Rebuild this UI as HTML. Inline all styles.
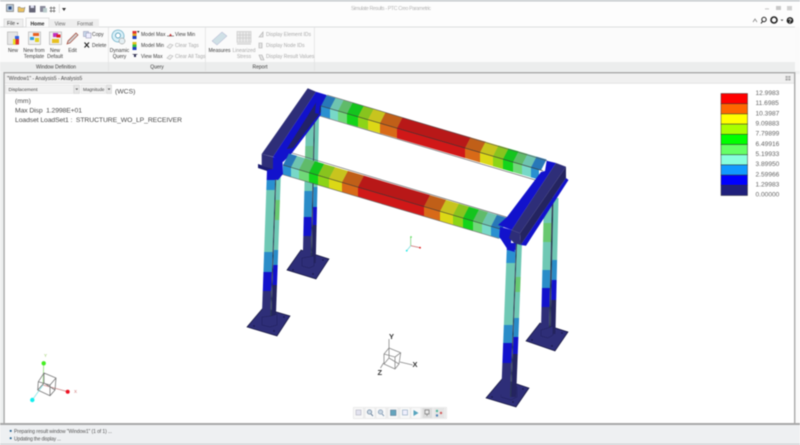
<!DOCTYPE html>
<html><head><meta charset="utf-8"><title>Simulate Results - PTC Creo Parametric</title>
<style>
html,body{margin:0;padding:0;background:#fff;width:800px;height:445px;overflow:hidden}
svg{display:block;filter:blur(.4px)}
text{font-family:"Liberation Sans",sans-serif;fill:#444}
.r{font-size:5px;fill:#3a3a3a;text-anchor:middle}
.s{font-size:5px;fill:#3a3a3a}
.g{font-size:5px;fill:#a8a8a8}
.gm{font-size:5px;fill:#a8a8a8;text-anchor:middle}
.lg{font-size:6.6px;fill:#666}
.m{font-size:6.8px;fill:#4a4a4a}
.nv{fill:#2e2e78}.br{fill:#1212cc}
</style></head><body>
<svg width="800" height="445" viewBox="0 0 800 445" xmlns="http://www.w3.org/2000/svg">
<rect width="800" height="445" fill="#fff"/>
<!-- chrome -->
<rect width="800" height="1.5" fill="#c4c8cc"/>
<rect x="0" y="1.5" width="800" height="25.5" fill="#fdfdfd"/>
<rect x="0" y="27" width="795" height="35" fill="#fbfbfb"/>
<rect x="0" y="62" width="795" height="9" fill="#eceded"/>
<rect x="0" y="26.5" width="795" height="1" fill="#dcdedf"/>
<rect x="795" y="27" width="5" height="398" fill="#fafafa"/>
<rect x="0" y="71" width="800" height="3" fill="#f0f1f1"/>
<rect x="4" y="72" width="791" height="1.4" fill="#a9a9a9"/>
<rect x="0" y="73" width="4" height="352" fill="#eef0f0"/>
<rect x="3.4" y="72" width="1.4" height="352" fill="#a9a9a9"/>
<rect x="794" y="72" width="1.4" height="352" fill="#a9a9a9"/>
<rect x="5" y="74" width="789" height="9" fill="#f0f0f0"/>
<rect x="5" y="83" width="789" height=".6" fill="#dadada"/>
<rect x="108" y="27" width=".8" height="44" fill="#e2e2e2"/>
<rect x="205" y="27" width=".8" height="44" fill="#e2e2e2"/>
<rect x="314" y="27" width=".8" height="44" fill="#e2e2e2"/>
<rect x="0" y="423" width="800" height="2" fill="#a8a8a8"/>
<rect x="0" y="425" width="800" height="20" fill="#eef0f2"/>
<rect x="0" y="443.6" width="800" height="1.4" fill="#d0d2d4"/>
<!-- quick access -->
<rect x="6.5" y="4.5" width="7" height="7" fill="#b8c8d8" stroke="#777" stroke-width=".7"/><rect x="8.5" y="6.5" width="3" height="3" fill="#2a4a80"/>
<path d="M18 12V7h2l1 1h3l1-1-1 5z" fill="#e8c060" stroke="#777" stroke-width=".5"/>
<rect x="29" y="5.5" width="6.5" height="7" fill="#667" rx=".5"/><rect x="30.5" y="5.5" width="3.5" height="2.5" fill="#dde"/>
<rect x="40" y="6" width="5.5" height="6" fill="#889" rx=".5"/><rect x="43" y="8" width="4" height="4.5" fill="#bcc"/>
<path d="M51 6.5v6M54 6.5v6M49.5 8h6M49.5 11h6" stroke="#666" stroke-width=".7" fill="none"/>
<rect x="59" y="4" width=".6" height="9" fill="#ccc"/>
<path d="M62 8h4l-2 3z" fill="#333"/>
<text x="351" y="10" style="font-size:5.2px;fill:#b4b4b4" textLength="80" lengthAdjust="spacing">Simulate Results - PTC Creo Parametric</text>
<!-- window ctrl -->
<rect x="765" y="8.4" width="4" height="1" fill="#c4c4c4"/><rect x="776" y="6" width="5" height="4" fill="#c8c8c8"/><rect x="787" y="6" width="5" height="4.4" fill="#d0d0d0"/>
<path d="M753 22l2-3 2 3" stroke="#888" fill="none" stroke-width=".8"/>
<circle cx="764" cy="19.5" r="2.2" fill="none" stroke="#222" stroke-width="1"/><path d="M762.5 21.5l-1.5 2" stroke="#222" stroke-width="1"/>
<circle cx="774" cy="20" r="3" fill="none" stroke="#222" stroke-width="1.6"/>
<path d="M780.5 19.5h3l-1.5 1.6z" fill="#555"/>
<circle cx="790" cy="20.5" r="3.4" fill="#222"/><text x="790" y="22.8" style="font-size:6px;font-weight:bold;fill:#fff;text-anchor:middle">?</text>
<!-- tabs -->
<rect x="4" y="19" width="19" height="8" fill="#eeeeee" stroke="#ccc" stroke-width=".5"/>
<text class="s" x="7" y="25">File</text><path d="M16.500 23h2.400l-1.200 1.400z" fill="#444"/>
<path d="M26 27V18h23v9" fill="#fbfbfb" stroke="#c8c8c8" stroke-width=".6"/>
<text class="r" x="37.500" y="25.400" style="font-weight:bold;fill:#222">Home</text>
<rect x="49" y="19" width="22" height="8" fill="#eeeeee"/><rect x="71" y="19" width="28" height="8" fill="#eeeeee"/>
<text class="r" x="60" y="25.400" style="fill:#666">View</text>
<text class="r" x="85" y="25.400" style="fill:#666">Format</text>
<!-- ribbon icons -->
<g>
<rect x="7.500" y="32" width="10" height="12.500" fill="#e6e6e6" stroke="#aaa" stroke-width=".6"/>
<rect x="13" y="39" width="2.500" height="5.500" fill="#e8e020"/><rect x="15.500" y="39" width="3.500" height="5.500" fill="#e03030"/><rect x="15" y="36" width="4" height="3" fill="#3060e0"/>
<rect x="28.500" y="32" width="12" height="12.500" fill="#efefef" stroke="#aaa" stroke-width=".6"/>
<rect x="33" y="33" width="6" height="3" fill="#e86020"/><rect x="30" y="37" width="4" height="3" fill="#30a0e0"/><rect x="35" y="38" width="4" height="4" fill="#e0d020"/>
<rect x="49.500" y="32" width="12" height="12.500" fill="#efefef" stroke="#aaa" stroke-width=".6"/>
<rect x="53" y="33" width="5" height="4" fill="#c030c0"/><rect x="56.500" y="34.500" width="4" height="3" fill="#e02020"/><rect x="52" y="39" width="7" height="4" fill="#e8c020"/>
<path d="M67 44l1-3 8-8 2 2-8 8z" fill="#d0d0d0" stroke="#a04030" stroke-width=".7"/>
<rect x="83.500" y="31.500" width="5" height="5" fill="#cde" stroke="#88a" stroke-width=".5"/><rect x="86" y="33" width="5" height="5" fill="#eef" stroke="#88a" stroke-width=".5"/>
<path d="M84.500 42.500l4.500 5M89 42.500l-4.500 5" stroke="#222" stroke-width="1.100"/>
<circle cx="118" cy="36" r="6" fill="#d8f0f8" stroke="#70b0c8" stroke-width=".8"/><circle cx="118" cy="35.500" r="2.500" fill="#fff" stroke="#4090b0" stroke-width=".7"/>
<circle cx="122" cy="41" r="3" fill="#e4eef2" stroke="#888" stroke-width=".5"/>
<rect x="132.500" y="31" width="4" height="8" fill="#e0a020"/><rect x="132.500" y="31" width="4" height="2.500" fill="#e03030"/><rect x="132.500" y="36" width="4" height="3" fill="#2040c0"/><path d="M137 31h2.500l-1.200 2z" fill="#222"/>
<rect x="132.500" y="42" width="4" height="8" fill="#30c040"/><rect x="132.500" y="42" width="4" height="2.500" fill="#e0c020"/><rect x="132.500" y="47" width="4" height="3" fill="#2040c0"/>
<path d="M132 54h6l-2 1v2h-2v-2z" fill="#335"/>
<path d="M167 36h7" stroke="#777" stroke-width=".8"/><path d="M169 36l1.500-2.500 1.500 2.500" fill="#c03030"/>
<path d="M167 47l3-3 3 1-3 3.500zM167 58l3-3 3 1-3 3.500z" fill="#eee" stroke="#bbb" stroke-width=".6"/>
<path d="M212 41l10-9 5 4-10 9z" fill="#cfe0e6" stroke="#aac" stroke-width=".5"/>
<rect x="237" y="31.500" width="14" height="11" fill="#e8e8e8" stroke="#bbb" stroke-width=".5"/>
<path d="M240 32v10M243 32v10M246 32v10M249 32v10M237 35h14M237 38h14" stroke="#bbb" stroke-width=".4"/><rect x="237" y="43.500" width="14" height="1" fill="#ccc"/>
<path d="M259 37l4-5v5zM259 48v-5h3v5zM259 55h3l2 5h-3z" fill="#e4e4e4" stroke="#aaa" stroke-width=".6"/>
</g>
<!-- ribbon text -->
<text class="r" x="13" y="52">New</text>
<text class="r" x="34" y="52">New from</text><text class="r" x="34" y="58">Template</text>
<text class="r" x="55" y="52">New</text><text class="r" x="55" y="58">Default</text>
<text class="r" x="72.500" y="52">Edit</text>
<text class="s" x="92" y="36">Copy</text><text class="s" x="92" y="47">Delete</text>
<text class="r" x="119.500" y="52">Dynamic</text><text class="r" x="119.500" y="58">Query</text>
<text class="s" x="141" y="36">Model Max</text><text class="s" x="141" y="47">Model Min</text><text class="s" x="141" y="58">View Max</text>
<text class="s" x="175" y="36">View Min</text><text class="g" x="175" y="47">Clear Tags</text><text class="g" x="175" y="58">Clear All Tags</text>
<text class="r" x="219.500" y="52">Measures</text>
<text class="gm" x="244" y="52">Linearized</text><text class="gm" x="244" y="58">Stress</text>
<text class="g" x="266" y="36">Display Element IDs</text><text class="g" x="266" y="47">Display Node IDs</text><text class="g" x="266" y="58">Display Result Values</text>
<text class="r" x="56" y="68.500">Window Definition</text><text class="r" x="157" y="68.500">Query</text><text class="r" x="260" y="68.500">Report</text>
<!-- window header -->
<text x="7" y="80" style="font-size:5px;fill:#444">"Window1" - Analysis5 - Analysis5</text>
<rect x="785.500" y="76" width="5" height="4.500" fill="#aaa"/><path d="M788 76v4.500M785.500 78.200h5" stroke="#eee" stroke-width=".6"/>
<rect x="5.500" y="85" width="68" height="8.500" fill="#f2f2f2" stroke="#dedede" stroke-width=".5"/>
<rect x="74" y="85" width="5.500" height="8.500" fill="#e6e6e6" stroke="#ccc" stroke-width=".5"/><path d="M75.500 88.500h2.600l-1.300 1.500z" fill="#444"/>
<rect x="81" y="85" width="24.500" height="8.500" fill="#f2f2f2" stroke="#dedede" stroke-width=".5"/>
<rect x="106.500" y="85" width="5" height="8.500" fill="#e6e6e6" stroke="#ccc" stroke-width=".5"/><path d="M107.700 88.500h2.600l-1.300 1.500z" fill="#444"/>
<text x="8.500" y="91" style="font-size:4.800px;fill:#444">Displacement</text>
<text x="83" y="91" style="font-size:4.600px;fill:#444">Magnitude</text>
<text class="m" x="115" y="93.300">(WCS)</text>
<text class="m" x="15" y="103">(mm)</text>
<text class="m" x="15" y="112.500" textLength="67" lengthAdjust="spacing">Max Disp&#160; 1.2998E+01</text>
<text class="m" x="15" y="122" textLength="167" lengthAdjust="spacing">Loadset LoadSet1 :&#160; STRUCTURE_WO_LP_RECEIVER</text>
<!-- legend -->
<g stroke="#333" stroke-width=".5">
<rect x="721" y="93.500" width="26.500" height="10.200" fill="#ff0000"/>
<rect x="721" y="103.700" width="26.500" height="10.200" fill="#ff6600"/>
<rect x="721" y="113.900" width="26.500" height="10.200" fill="#ffff00"/>
<rect x="721" y="124.100" width="26.500" height="10.200" fill="#a8ff00"/>
<rect x="721" y="134.300" width="26.500" height="10.200" fill="#00ff00"/>
<rect x="721" y="144.500" width="26.500" height="10.200" fill="#66ff66"/>
<rect x="721" y="154.700" width="26.500" height="10.200" fill="#88ffdd"/>
<rect x="721" y="164.900" width="26.500" height="10.200" fill="#1199ff"/>
<rect x="721" y="175.100" width="26.500" height="10.200" fill="#0000ff"/>
<rect x="721" y="185.300" width="26.500" height="10.200" fill="#20207c"/>
</g>
<text class="lg" x="755.500" y="95">12.9983</text>
<text class="lg" x="755.500" y="105.200">11.6985</text>
<text class="lg" x="755.500" y="115.300">10.3987</text>
<text class="lg" x="755.500" y="125.500">9.09883</text>
<text class="lg" x="755.500" y="135.700">7.79899</text>
<text class="lg" x="755.500" y="145.900">6.49916</text>
<text class="lg" x="755.500" y="156">5.19933</text>
<text class="lg" x="755.500" y="166.200">3.89950</text>
<text class="lg" x="755.500" y="176.400">2.59966</text>
<text class="lg" x="755.500" y="186.500">1.29983</text>
<text class="lg" x="755.500" y="196.700">0.00000</text>
<!-- plates -->
<g fill="#2e2e78" stroke="#14143c" stroke-width=".7">
<polygon points="247,327 263,308 290,316 277,336"/>
<polygon points="287,270 301,250 329,259 316,279"/>
<polygon points="486,398 502,379 529,388 516,407"/>
<polygon points="526,341 540,323 568,332 555,351"/>
</g>
<g fill="#14143c"><circle cx="254" cy="326" r=".7"/><circle cx="267" cy="312" r=".7"/><circle cx="284" cy="317" r=".7"/><circle cx="274" cy="331" r=".7"/>
<circle cx="293" cy="270" r=".7"/><circle cx="304" cy="254" r=".7"/><circle cx="323" cy="260" r=".7"/><circle cx="313" cy="274" r=".7"/>
<circle cx="492" cy="397" r=".7"/><circle cx="506" cy="383" r=".7"/><circle cx="523" cy="389" r=".7"/><circle cx="513" cy="402" r=".7"/>
<circle cx="532" cy="340" r=".7"/><circle cx="543" cy="327" r=".7"/><circle cx="562" cy="333" r=".7"/><circle cx="552" cy="346" r=".7"/></g>
<!-- column: back left -->
<g transform="translate(306,118) skewX(-1.300)">
<rect x="0" width="8" height="73" fill="#6fc8b4"/><rect x="0" y="28" width="8" height="12" fill="#68c070" opacity=".6"/><rect y="80" width="8" height="19" fill="#2a8cc8"/><rect y="73" width="8" height="7" fill="#2a8cc8"/><rect y="99" width="8" height="19" fill="#1212cc"/><rect y="118" width="8" height="27" fill="#2e2e78"/>
<rect x="9" width="4" height="69" fill="#6fc8b4"/><rect x="9" y="69" width="4" height="20" fill="#2a8cc8"/><rect x="9" y="89" width="4" height="18" fill="#1212cc"/><rect x="9" y="107" width="4" height="38" fill="#242460"/>
<rect x="8" width="1" height="145" fill="#2a3a50"/>
</g>
<!-- back right col -->
<g transform="translate(544,198) skewX(-1.300)">
<rect width="8" height="25" fill="#6fc8b4"/><rect y="25" width="8" height="19" fill="#68c870"/><rect y="44" width="8" height="28" fill="#6fc8b4"/><rect y="72" width="8" height="18" fill="#2a8cc8"/><rect y="90" width="8" height="19" fill="#1212cc"/><rect y="109" width="8" height="27" fill="#2e2e78"/>
<rect x="9.500" width="5" height="62" fill="#6fc8b4"/><rect x="9.500" y="62" width="5" height="20" fill="#2a8cc8"/><rect x="9.500" y="82" width="5" height="20" fill="#1212cc"/><rect x="9.500" y="102" width="5" height="34" fill="#242460"/>
<rect x="8" width="1.500" height="136" fill="#2a3a50"/>
</g>
<!-- back beam top face -->
<g transform="matrix(1,.292,-.52,1,321,106)">
<rect x="-2" y="-10.700" width="11.200" height="10.700" fill="#2878b8"/><rect x="9" y="-10.700" width="8.200" height="10.700" fill="#6fc4b0"/><rect x="17" y="-10.700" width="9.200" height="10.700" fill="#60bb6a"/><rect x="26" y="-10.700" width="11.200" height="10.700" fill="#14c41e"/><rect x="37" y="-10.700" width="10.200" height="10.700" fill="#88c41e"/><rect x="47" y="-10.700" width="12.200" height="10.700" fill="#c8c41e"/><rect x="59" y="-10.700" width="17.200" height="10.700" fill="#c05f18"/><rect x="76" y="-10.700" width="68.200" height="10.700" fill="#b81818"/><rect x="144" y="-10.700" width="15.200" height="10.700" fill="#c05f18"/><rect x="159" y="-10.700" width="13.200" height="10.700" fill="#c8c41e"/><rect x="172" y="-10.700" width="10.200" height="10.700" fill="#88c41e"/><rect x="182" y="-10.700" width="10.200" height="10.700" fill="#14c41e"/><rect x="192" y="-10.700" width="9.200" height="10.700" fill="#60bb6a"/><rect x="201" y="-10.700" width="9.200" height="10.700" fill="#6fc4b0"/><rect x="210" y="-10.700" width="10" height="10.700" fill="#2878b8"/>
</g>
<g transform="matrix(1,.292,0,1,321,106)">
<rect x="-2" width="11.200" height="10" fill="#2a90d0"/><rect x="9" width="8.200" height="10" fill="#78d8c8"/><rect x="17" width="9.200" height="10" fill="#70d878"/><rect x="26" width="11.200" height="10" fill="#14d41a"/><rect x="37" width="10.200" height="10" fill="#8cd418"/><rect x="47" width="12.200" height="10" fill="#dcd816"/><rect x="59" width="17.200" height="10" fill="#d86a18"/><rect x="76" width="68.200" height="10" fill="#d01818"/><rect x="144" width="15.200" height="10" fill="#d86a18"/><rect x="159" width="13.200" height="10" fill="#dcd816"/><rect x="172" width="10.200" height="10" fill="#8cd418"/><rect x="182" width="10.200" height="10" fill="#14d41a"/><rect x="192" width="9.200" height="10" fill="#70d878"/><rect x="201" width="9.200" height="10" fill="#78d8c8"/><rect x="210" width="8" height="10" fill="#2a90d0"/>
</g>
<g stroke="#555" stroke-width=".6" fill="none"><path d="M327 95L547 160.700"/><path d="M321 106L543 170.800" stroke="#333"/><path d="M320 116L538 180.800"/></g>
<!-- left cross beam -->
<polygon class="br" points="316,91.700 326.700,95 321,106 320.700,115 292,153 283,162 273,156.700"/>
<polygon class="nv" points="307.700,88.300 316,91.700 273,156.700 261.700,154"/>
<polygon fill="#222268" points="316,102.700 321,106 320.700,112 293,148 286.700,149"/>
<polygon class="br" points="316,102.700 320,105 319,114 315,113"/>
<!-- front beam -->
<g transform="matrix(1,.295,-.52,1,283,165)">
<rect x="0" y="-11.500" width="8.200" height="11.500" fill="#2878b8"/><rect x="8" y="-11.500" width="8.200" height="11.500" fill="#6fc4b0"/><rect x="16" y="-11.500" width="10.200" height="11.500" fill="#60bb6a"/><rect x="26" y="-11.500" width="9.200" height="11.500" fill="#14c41e"/><rect x="35" y="-11.500" width="11.200" height="11.500" fill="#88c41e"/><rect x="46" y="-11.500" width="13.200" height="11.500" fill="#c8c41e"/><rect x="59" y="-11.500" width="16.200" height="11.500" fill="#c05f18"/><rect x="75" y="-11.500" width="66.200" height="11.500" fill="#b81818"/><rect x="141" y="-11.500" width="16.200" height="11.500" fill="#c05f18"/><rect x="157" y="-11.500" width="13.200" height="11.500" fill="#c8c41e"/><rect x="170" y="-11.500" width="10.200" height="11.500" fill="#88c41e"/><rect x="180" y="-11.500" width="10.200" height="11.500" fill="#14c41e"/><rect x="190" y="-11.500" width="9.200" height="11.500" fill="#60bb6a"/><rect x="199" y="-11.500" width="9.200" height="11.500" fill="#6fc4b0"/><rect x="208" y="-11.500" width="11" height="11.500" fill="#2878b8"/>
</g>
<g transform="matrix(1,.295,0,1,283,165)">
<rect width="8.200" height="9.500" fill="#2a90d0"/><rect x="8" width="8.200" height="9.500" fill="#78d8c8"/><rect x="16" width="10.200" height="9.500" fill="#70d878"/><rect x="26" width="9.200" height="9.500" fill="#14d41a"/><rect x="35" width="11.200" height="9.500" fill="#8cd418"/><rect x="46" width="13.200" height="9.500" fill="#dcd816"/><rect x="59" width="16.200" height="9.500" fill="#d86a18"/><rect x="75" width="66.200" height="9.500" fill="#d01818"/><rect x="141" width="16.200" height="9.500" fill="#d86a18"/><rect x="157" width="13.200" height="9.500" fill="#dcd816"/><rect x="170" width="10.200" height="9.500" fill="#8cd418"/><rect x="180" width="10.200" height="9.500" fill="#14d41a"/><rect x="190" width="9.200" height="9.500" fill="#70d878"/><rect x="199" width="9.200" height="9.500" fill="#78d8c8"/><rect x="208" width="10" height="9.500" fill="#2a90d0"/>
</g>
<g stroke="#555" stroke-width=".6" fill="none"><path d="M292 153L507 217.200"/><path d="M283 165L500 229" stroke="#333"/><path d="M282.500 174.500L499 238.500"/></g>
<!-- left-front col -->
<g transform="translate(267,170) skewX(-2)">
<rect width="8.500" height="10" fill="#1212cc"/><rect y="10" width="8.500" height="10" fill="#2a90d0"/><rect y="20" width="8.500" height="62" fill="#6fc8b4"/><rect y="82" width="8.500" height="20" fill="#2a8cc8"/><rect y="102" width="8.500" height="19" fill="#1212cc"/><rect y="121" width="8.500" height="27" fill="#2e2e78"/>
<rect x="9.500" width="4.500" height="30" fill="#6fc8b4"/><rect x="9.500" y="30" width="4.500" height="20" fill="#68c870"/><rect x="9.500" y="50" width="4.500" height="30" fill="#6fc8b4"/><rect x="9.500" y="80" width="4.500" height="15" fill="#2a8cc8"/><rect x="9.500" y="95" width="4.500" height="20" fill="#1212cc"/><rect x="9.500" y="115" width="4.500" height="33" fill="#242460"/>
<rect x="8.500" width="1" height="148" fill="#2a3a50"/>
</g>
<polygon fill="#2e2e78" stroke="#1c1c50" stroke-width=".4" points="262,317 262,325 270,327 277,325 277,314 271,316"/>
<polygon fill="#2e2e78" stroke="#1c1c50" stroke-width=".4" points="302,258 302,266 309,268 314,266 314,256"/>
<polygon fill="#2e2e78" stroke="#1c1c50" stroke-width=".4" points="501,395 501,397 511,400 517,397 517,387 507,389"/>
<polygon fill="#2e2e78" stroke="#1c1c50" stroke-width=".4" points="541,330 541,336 548,338 553,335 553,326 548,328"/>
<!-- right-front col -->
<g transform="translate(507,243) skewX(-2.200)">
<rect width="9" height="7" fill="#1212cc"/><rect y="7" width="9" height="13" fill="#2a90d0"/><rect y="20" width="9" height="62" fill="#6fc8b4"/><rect y="82" width="9" height="18" fill="#2a8cc8"/><rect y="100" width="9" height="20" fill="#1212cc"/><rect y="120" width="9" height="34" fill="#2e2e78"/>
<rect x="10" width="5" height="34" fill="#6fc8b4"/><rect x="10" y="34" width="5" height="15" fill="#68c870"/><rect x="10" y="49" width="5" height="26" fill="#6fc8b4"/><rect x="10" y="75" width="5" height="19" fill="#2a8cc8"/><rect x="10" y="94" width="5" height="17" fill="#1212cc"/><rect x="10" y="111" width="5" height="43" fill="#242460"/>
<rect x="9" width="1" height="154" fill="#2a3a50"/>
</g>
<!-- front-left corner -->
<polygon fill="#1c1c70" points="258,164 280,171 279,175 258,168"/>
<polygon class="nv" points="261.700,154 273,157 273,169 261.700,166"/>
<polygon class="br" points="273,157 282.500,160 283,174 278,180 267,178 267,170 273,169"/>
<!-- right cross beam -->
<polygon class="br" points="566,178 568.500,180 526,245.700 520.700,245"/>
<polygon fill="#242460" points="566,166.700 566,178 520.700,245 520,233.300"/>
<polygon class="br" points="546.700,160.700 556,163 511.700,230 498,225 507,217 541,172 545,171"/>
<polygon class="nv" points="556,163 566,166.700 520,233.300 511.700,230"/>
<polygon class="br" points="500,226.700 511.700,230 511,243 515,252 508,250 499.300,236.700"/>
<polygon class="nv" points="511.700,230 520,233.300 520.700,245 514,243 509,238"/>
<!-- small triad -->
<g stroke-width=".8" fill="none"><path d="M410.700 245.700V237" stroke="#80d080"/><path d="M410.700 245.700L420 247.700" stroke="#d08080"/><path d="M410.700 245.700L406.700 250.700" stroke="#80e0e0"/></g>
<circle cx="411" cy="237" r=".9" fill="#60e060"/><circle cx="420" cy="247.700" r=".9" fill="#e02020"/><circle cx="406.700" cy="250.700" r=".9" fill="#20e8e8"/>
<!-- view triad -->
<g stroke="#888" stroke-width=".8" fill="none">
<path d="M389 348V339M400 362L412.700 365M383.500 363L380.500 368"/>
<path d="M389 348L400.700 352.700 399 364 395 369 384 364 384 354zM384 354L395 357 395 369M395 357L400.700 352.700M389 348L389 358 399 364M389 358L384 364"/>
</g>
<text x="389" y="339" style="font-size:7.500px;font-weight:bold;fill:#333">Y</text>
<text x="412.500" y="367" style="font-size:7.500px;font-weight:bold;fill:#333">X</text>
<text x="377.500" y="375" style="font-size:7.500px;font-weight:bold;fill:#333">Z</text>
<!-- left triad -->
<g fill="none" stroke-width=".9">
<path d="M43.700 363.300L43 385" stroke="#a0e090"/><path d="M43 385L67.700 391.700" stroke="#d09090"/><path d="M43 385L32.300 400" stroke="#90e8e8"/>
<path d="M44 373L56 378 55 390 50 395.700 37.700 390 38.300 381.700zM38.300 381.700L50 385 50 395.700M50 385L56 378M44 373V383L55 390M44 383L37.700 390" stroke="#777" stroke-width=".8"/>
</g>
<circle cx="43.700" cy="363.300" r="2.200" fill="#44ee22"/><circle cx="67.700" cy="391.700" r="2" fill="#ee1122"/><circle cx="32.300" cy="400" r="2.200" fill="#11eeee"/>
<text x="44" y="357" style="font-size:4.500px;fill:#9c6">Y</text><text x="74" y="393" style="font-size:4.500px;fill:#c77">X</text>
<!-- bottom toolbar -->
<rect x="353" y="407" width="94" height="12" fill="#ebebeb"/>
<g fill="#f8f8f8"><rect x="354" y="408" width="9" height="10"/><rect x="365.500" y="408" width="9" height="10"/><rect x="376.500" y="408" width="9" height="10"/><rect x="388.500" y="408" width="9" height="10"/><rect x="400.500" y="408" width="9" height="10"/><rect x="411.500" y="408" width="9" height="10"/></g>
<rect x="422.500" y="408" width="9.500" height="10" fill="#dcdcdc"/><rect x="434.500" y="408" width="9.500" height="10" fill="#e4e4e4"/>
<g opacity=".75">
<rect x="356" y="410" width="5" height="5" fill="#dde" stroke="#99a" stroke-width=".6"/>
<circle cx="369.500" cy="412" r="2.200" fill="#bcd" stroke="#357" stroke-width=".7"/><path d="M371 414l2 2" stroke="#357"/>
<circle cx="380.500" cy="412" r="2.200" fill="#bcd" stroke="#579" stroke-width=".7"/><path d="M382 414l2 2" stroke="#579"/>
<rect x="390.500" y="410" width="5.500" height="5.500" fill="#38a" stroke="#246" stroke-width=".5"/>
<rect x="402.500" y="410" width="5" height="5" fill="#eef" stroke="#68a" stroke-width=".6"/>
<path d="M413.500 410l5 3-5 3z" fill="#28a"/>
<path d="M425 410h4v4h-4zM427 414v2" stroke="#555" stroke-width=".7" fill="#eee"/>
<circle cx="437" cy="411" r="1.200" fill="#2a8"/><circle cx="441" cy="413" r="1.200" fill="#c33"/><circle cx="437" cy="415.500" r="1.200" fill="#26a"/>
</g>
<!-- status -->
<rect x="9.800" y="430" width="1.800" height="1.800" fill="#1a5a8a"/>
<rect x="9.800" y="437.300" width="1.800" height="1.800" fill="#1a5a8a"/>
<text x="14" y="433" style="font-size:5px;fill:#555" textLength="98" lengthAdjust="spacing">Preparing result window "Window1" (1 of 1) ...</text>
<text x="14" y="440.300" style="font-size:5px;fill:#555" textLength="47" lengthAdjust="spacing">Updating the display ...</text>
</svg>
</body></html>
